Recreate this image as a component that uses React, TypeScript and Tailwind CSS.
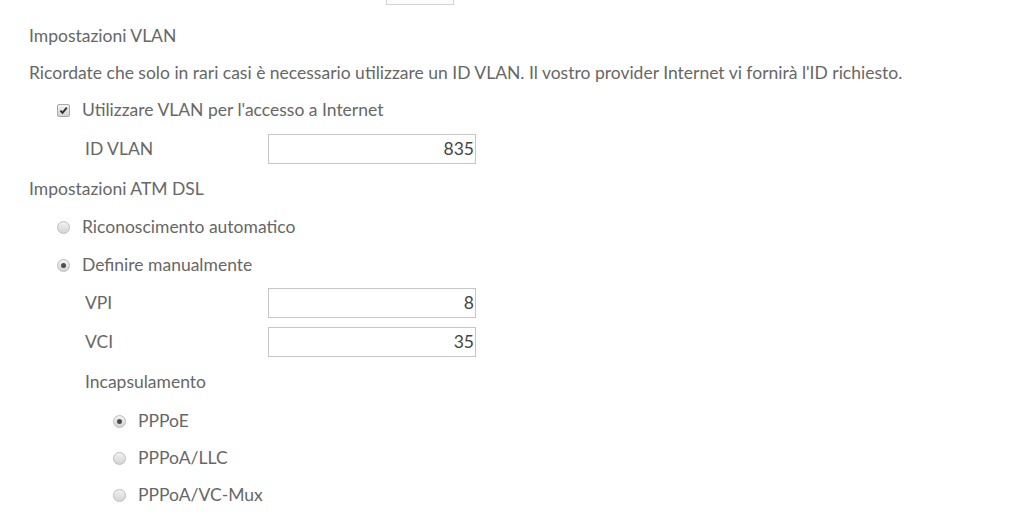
import React from "react";

const Checkbox = () => (
  <span className="inline-flex h-[13px] w-[13px] items-center justify-center rounded-[2px] border border-[#a8a8a8] bg-gradient-to-b from-[#f4f4f4] to-[#d2d2d2]">
    <svg width="9" height="9" viewBox="0 0 9 9">
      <path d="M1.4 4.6 L3.5 6.8 L7.8 1.6" stroke="#2f2f2f" strokeWidth="1.9" fill="none" />
    </svg>
  </span>
);

const Radio = ({ on }: { on?: boolean }) => (
  <span className="inline-flex h-[13px] w-[13px] items-center justify-center rounded-full border border-[#bdbdbd] bg-gradient-to-b from-[#f2f2f2] to-[#d4d4d4]">
    {on && <span className="h-[5px] w-[5px] rounded-full bg-[#4d4d4d]" />}
  </span>
);

const Field = ({ value }: { value: string }) => (
  <div className="flex h-[30px] w-[208px] items-center justify-end border border-[#c6c6c6] bg-white pr-[1px] text-[#444]">
    {value}
  </div>
);

export default function App() {
  return (
    <div
      className="h-[528px] w-[1024px] overflow-hidden bg-white text-[17.5px] text-[#676767]"
      style={{ fontFamily: "Lato, 'Liberation Sans', sans-serif" }}
    >
      <div className="relative mt-[-25px] flex h-[30px] items-end pl-[386px]">
        <div className="h-[30px] w-[68px] border border-[#d4d4d4] bg-[#fbfbfb]" />
      </div>
      <div className="pl-[29px] pt-[13px]">
        <div className="flex h-[37px] items-center">Impostazioni VLAN</div>
        <div className="flex h-[37px] items-center">
          Ricordate che solo in rari casi è necessario utilizzare un ID VLAN. Il vostro provider Internet vi fornirà l'ID richiesto.
        </div>
        <div className="flex h-[37px] items-center gap-[12px] pl-[28px]">
          <Checkbox />
          <span>Utilizzare VLAN per l'accesso a Internet</span>
        </div>
        <div className="flex h-[40px] items-center pl-[56px]">
          <span className="w-[183px]">ID VLAN</span>
          <Field value="835" />
        </div>
        <div className="flex h-[40px] items-center">Impostazioni ATM DSL</div>
        <div className="flex h-[37px] items-center gap-[12px] pl-[28px]">
          <Radio />
          <span>Riconoscimento automatico</span>
        </div>
        <div className="flex h-[38px] items-center gap-[12px] pl-[28px]">
          <Radio on />
          <span>Definire manualmente</span>
        </div>
        <div className="flex h-[38px] items-center pl-[56px]">
          <span className="w-[183px]">VPI</span>
          <Field value="8" />
        </div>
        <div className="flex h-[40px] items-center pl-[56px]">
          <span className="w-[183px]">VCI</span>
          <Field value="35" />
        </div>
        <div className="flex h-[40px] items-center pl-[56px]">Incapsulamento</div>
        <div className="flex h-[38px] items-center gap-[12px] pl-[84px]">
          <Radio on />
          <span>PPPoE</span>
        </div>
        <div className="flex h-[37px] items-center gap-[12px] pl-[84px]">
          <Radio />
          <span>PPPoA/LLC</span>
        </div>
        <div className="flex h-[37px] items-center gap-[12px] pl-[84px]">
          <Radio />
          <span>PPPoA/VC-Mux</span>
        </div>
      </div>
    </div>
  );
}
